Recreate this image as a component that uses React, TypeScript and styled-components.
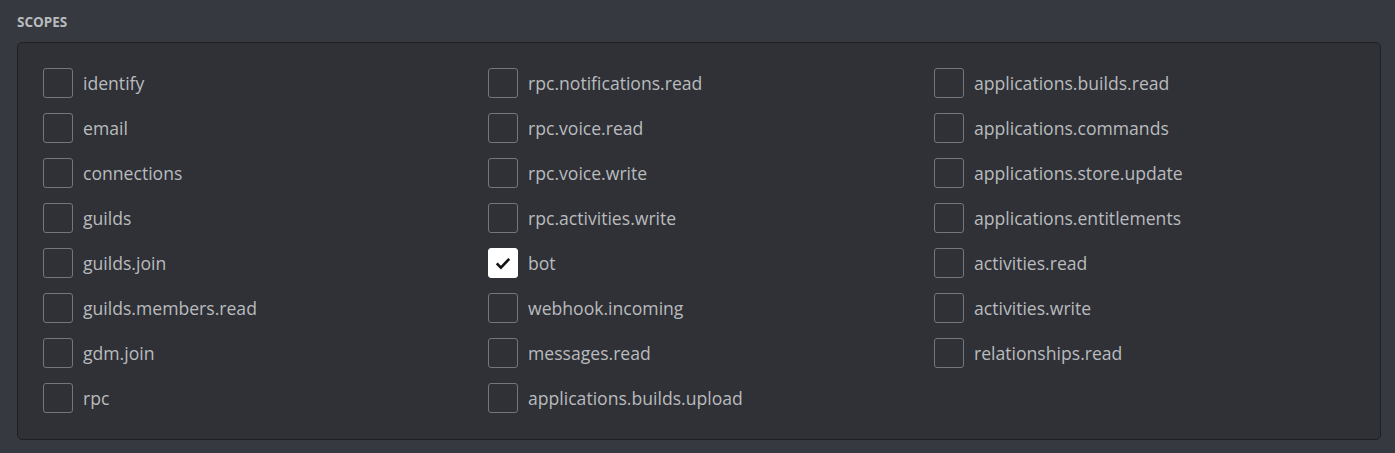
import React from 'react';
import styled, { createGlobalStyle } from 'styled-components';

const GlobalStyle = createGlobalStyle`
	body {
		margin: 0;
		background-color: #36393f;
		font-family: 'Open Sans', 'Noto Sans', sans-serif;
	}
`;

const Section = styled.section`
	padding: 13px 14px 13px 17px;
`;
const H2 = styled.h2`
	margin: 0 0 11px;
	height: 18px;
	line-height: 18px;
	font-size: 13.5px;
	font-weight: 700;
	text-transform: uppercase;
	color: #b9bbbe;
`;
const BoxDiv = styled.div`
	display: grid;
	grid-template-columns: 445px 446px 1fr;
	grid-auto-flow: column;
	grid-template-rows: repeat(8, 30px);
	row-gap: 15px;
	padding: 25px 25px 26px;
	background-color: #2f3136;
	border: 1px solid #1e1f22;
	border-radius: 5px;
`;
const Label = styled.label`
	display: flex;
	align-items: center;
	gap: 10px;
	color: #b9bbbe;
	font-size: 17.6px;
	cursor: pointer;
`;
const Check = styled.span<{ $checked?: boolean }>`
	flex: 0 0 30px;
	display: flex;
	justify-content: center;
	align-items: center;
	box-sizing: border-box;
	width: 30px;
	height: 30px;
	border: 1px solid ${(p) => (p.$checked ? '#ffffff' : '#72767d')};
	border-radius: 3px;
	background-color: ${(p) => (p.$checked ? '#ffffff' : 'transparent')};
	svg {
		width: 20px;
		height: 20px;
	}
`;

const scopes = [
	'identify',
	'email',
	'connections',
	'guilds',
	'guilds.join',
	'guilds.members.read',
	'gdm.join',
	'rpc',
	'rpc.notifications.read',
	'rpc.voice.read',
	'rpc.voice.write',
	'rpc.activities.write',
	'bot',
	'webhook.incoming',
	'messages.read',
	'applications.builds.upload',
	'applications.builds.read',
	'applications.commands',
	'applications.store.update',
	'applications.entitlements',
	'activities.read',
	'activities.write',
	'relationships.read',
];

const Scopes = () => {
	return (
		<Section>
			<GlobalStyle />
			<H2>Scopes</H2>
			<BoxDiv>
				{scopes.map((name) => {
					const checked = name === 'bot';
					return (
						<Label key={name}>
							<Check $checked={checked}>
								{checked && (
									<svg viewBox="0 0 24 24">
										<path d="M4.5 12.5l5 5L19.5 7" fill="none" stroke="#111214" strokeWidth="3.2" />
									</svg>
								)}
							</Check>
							{name}
						</Label>
					);
				})}
			</BoxDiv>
		</Section>
	);
};

export default Scopes;
